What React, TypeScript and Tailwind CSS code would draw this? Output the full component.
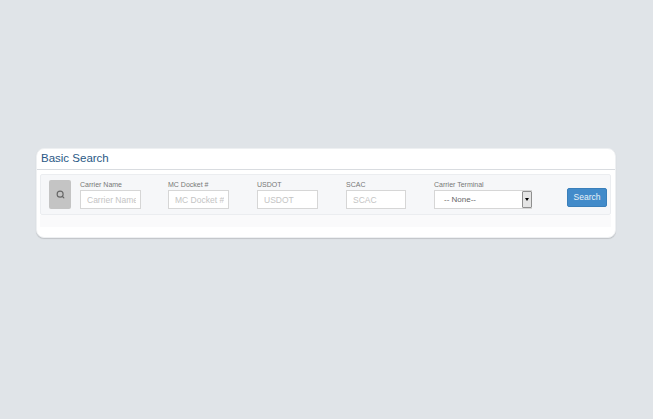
import { Search } from 'lucide-react'

const fields = [
  { label: 'Carrier Name', width: 'w-[61px]', gap: 'mr-[27px]' },
  { label: 'MC Docket #', width: 'w-[61px]', gap: 'mr-[28px]' },
  { label: 'USDOT', width: 'w-[61px]', gap: 'mr-[28px]' },
  { label: 'SCAC', width: 'w-[60px]', gap: 'mr-[28px]' },
]

export default function App() {
  return (
    <div className="min-h-[419px] bg-[#e0e4e8] pt-[148px] pl-[36px] font-['Liberation_Sans',Arial,sans-serif]">
      <div className="w-[580px] h-[90px] bg-white border border-[#eef0f2] rounded-[8px] overflow-hidden shadow-[0_1px_1px_rgba(0,0,0,0.14)]">
        <div className="h-[21px] pl-[4px] border-b border-[#d9dce0] text-[11.5px] leading-[19px] text-[#2a5885]">
          Basic Search
        </div>
        <div className="mt-[4px] ml-[3px] mr-[4px] h-[41px] flex items-start bg-[#f6f7f9] border border-[#ebedf0] rounded-[2px] pl-[8px] pt-[5px]">
          <div className="w-[22px] h-[29px] mr-[9px] flex items-center justify-center bg-[#c4c4c4] rounded-[2px]">
            <Search size={9} strokeWidth={3} className="text-[#666]" />
          </div>
          {fields.map((f) => (
            <div key={f.label} className={f.gap}>
              <div className="h-[10px] text-[7px] leading-[10px] text-[#777]">{f.label}</div>
              <input
                placeholder={f.label}
                className={`${f.width} h-[19px] block bg-white border border-[#d6d6d6] pl-[6px] pr-[4px] text-[8.5px] placeholder:text-[#c4c4c4] outline-none`}
              />
            </div>
          ))}
          <div className="mr-[35px]">
            <div className="h-[10px] text-[7px] leading-[10px] text-[#777]">Carrier Terminal</div>
            <div className="w-[98px] h-[19px] flex bg-white border border-r-0 border-[#d6d6d6]">
              <span className="flex-1 pl-[9px] text-[8px] leading-[18px] text-[#666]">-- None--</span>
              <span className="w-[10px] flex items-center justify-center bg-[#e4e4e4] border border-[#8f8f8f] rounded-[1px]">
                <span className="w-0 h-0 border-x-[2.5px] border-x-transparent border-t-[3px] border-t-black" />
              </span>
            </div>
          </div>
          <button className="w-[40px] h-[19px] mt-[8px] bg-[#428bca] border border-[#3a7fba] rounded-[2px] text-[8.5px] text-[#e8f1f8]">
            Search
          </button>
        </div>
        <div className="ml-[3px] mr-[4px] h-[12px] bg-[#fafafb]" />
      </div>
    </div>
  )
}
